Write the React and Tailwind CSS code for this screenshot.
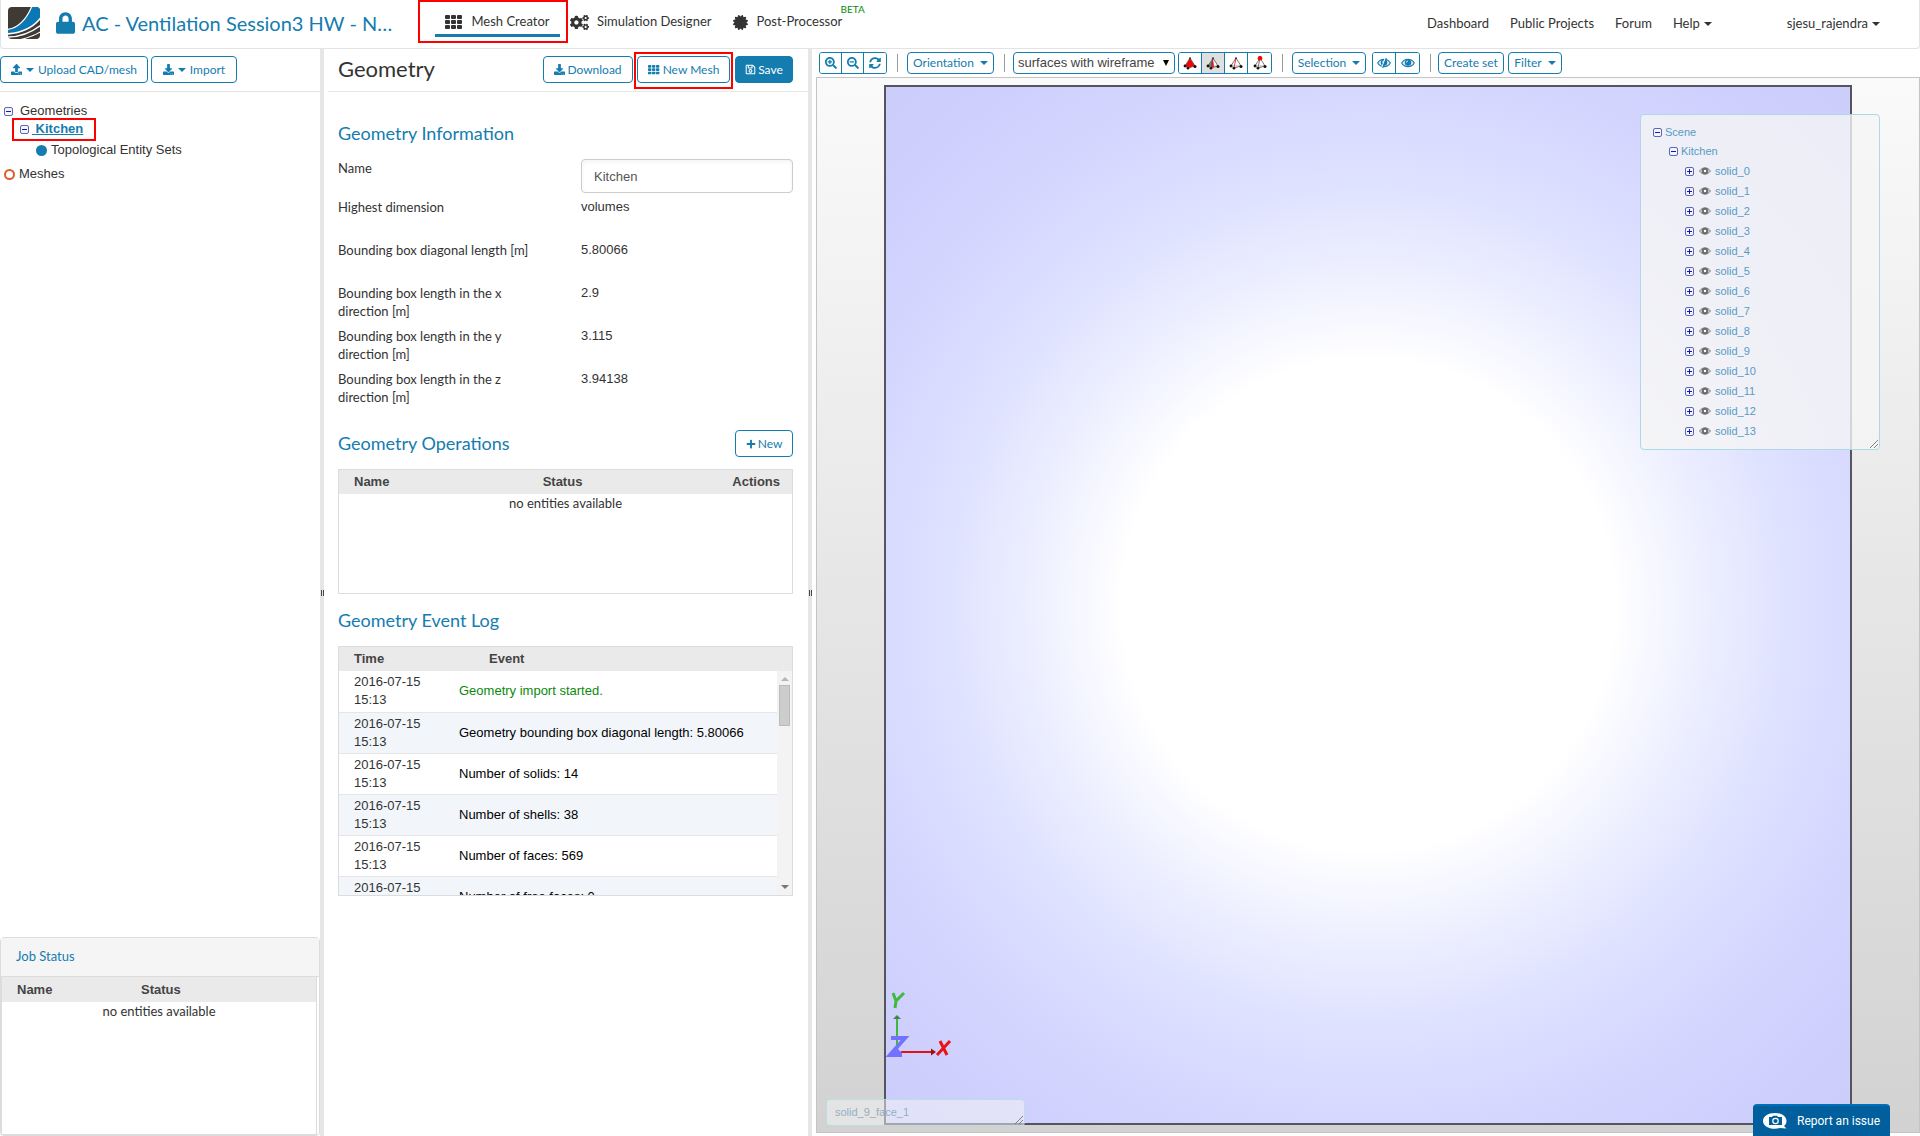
import React from "react";
import {
  FaLock,
  FaCogs,
  FaCertificate,
  FaUpload,
  FaDownload,
  FaPlus,
  FaSearchPlus,
  FaSearchMinus,
  FaSyncAlt,
  FaRegSave,
} from "react-icons/fa";

const ARIAL = "font-['Liberation_Sans',Arial,sans-serif]";

function Logo() {
  return (
    <svg viewBox="0 0 32 32" className="size-8" aria-label="Home">
      <defs>
        <clipPath id="logo-clip">
          <rect width="32" height="32" rx="4" />
        </clipPath>
      </defs>
      <g clipPath="url(#logo-clip)">
        <rect width="32" height="32" fill="#403a37" />
        <path d="M24 0H32V11C24 21 13 26 0 27V22C12 21 19 11 24 0Z" fill="#0a78b5" />
        <g fill="none" stroke="#fff">
          <path d="M24 -1C19 11 12 21 -1 22.500" strokeWidth="1.200" />
          <path d="M33 10.500C25 21 13 26 -1 27" strokeWidth="1.600" />
          <path d="M33 18C24 25 13 30 -1 30" strokeWidth="1.400" />
          <path d="M33 24.500C26 29 19 31 11 33" strokeWidth="1.200" />
        </g>
      </g>
    </svg>
  );
}

function GridIcon({ className }) {
  return (
    <svg viewBox="0 0 18 15" className={className} fill="currentColor" aria-hidden="true">
      {[0, 5, 10].map((y) =>
        [0, 6, 12].map((x) => <rect key={`${x}-${y}`} x={x} y={y} width="5" height="4" rx="1" />)
      )}
    </svg>
  );
}

function Caret() {
  return (
    <svg viewBox="0 0 8 4" className="h-1 w-2 shrink-0" fill="currentColor" aria-hidden="true">
      <path d="M0 0H8L4 4Z" />
    </svg>
  );
}

function Eye({ className, slash = false }) {
  return (
    <svg viewBox="0 0 14 10" className={className} aria-hidden="true">
      <path d="M0.700 5C3.500 0.200 10.500 0.200 13.300 5C10.500 9.800 3.500 9.800 0.700 5Z" fill="#d8e9f3" stroke="currentColor" strokeWidth="1.100" />
      <circle cx="7" cy="4.600" r="3.200" fill="currentColor" />
      <path d="M5.400 4.600A1.600 1.600 0 0 1 7 3" fill="none" stroke="#fff" strokeWidth="0.800" />
      {slash && (
        <>
          <path d="M8.300 0L4.700 10" stroke="#fff" strokeWidth="1.200" />
          <path d="M9.400 0L5.700 10" stroke="currentColor" strokeWidth="1.100" />
        </>
      )}
    </svg>
  );
}

function SceneEye() {
  return (
    <svg viewBox="0 0 12 8" className="h-2 w-3" aria-hidden="true">
      <path d="M0.500 4C3.500 -0.300 8.500 -0.300 11.500 4C8.500 8.300 3.500 8.300 0.500 4Z" fill="#ccc" stroke="#888" />
      <circle cx="6" cy="4" r="2.200" fill="#fff" stroke="#6c6c6c" strokeWidth="2" />
    </svg>
  );
}

function Toggle({ open = true }) {
  return (
    <svg viewBox="0 0 9 9" className="size-[9px] shrink-0" fill="none" aria-hidden="true">
      <rect x="0.500" y="0.500" width="8" height="8" rx="1.500" fill="#f3f3fb" stroke="#5a68b0" />
      <path d={open ? "M2 4.500H7" : "M2 4.500H7M4.500 2V7"} stroke="#1414c8" />
    </svg>
  );
}

function Tetra({ kind }) {
  return (
    <svg viewBox="0 0 14 14" className="size-[14px]" aria-hidden="true">
      <path d="M7 2L2 10L5 12L12 10Z" fill={kind === "volume" ? "#f00" : "#fff"} stroke="#555" strokeWidth="0.800" />
      {kind === "face" && <path d="M7 2L2 10L5 12Z" fill="#777" />}
      {kind === "face" && <path d="M7 2L4.500 12L8 11.300Z" fill="#f00" />}
      {kind !== "volume" && <path d="M7 2L5 12" stroke={kind === "edge" ? "#f00" : "#555"} strokeWidth="0.800" />}
      {kind !== "volume" && <path d="M2 10L12 10" stroke="#777" strokeWidth="0.600" />}
      <circle cx="2" cy="10" r="1.400" fill="#111" />
      <circle cx="5" cy="12.200" r="1.300" fill="#111" />
      <circle cx="12" cy="10.500" r="1.500" fill="#111" />
      <circle cx="7" cy="2.200" r={kind === "node" ? 2.300 : 1} fill={kind === "node" ? "#f00" : "#333"} />
    </svg>
  );
}

function Grip() {
  return (
    <svg viewBox="0 0 8 8" className="absolute right-px bottom-px size-2" stroke="#666" strokeWidth="0.800" aria-hidden="true">
      <path d="M0 8L8 0M4 8L8 4" />
    </svg>
  );
}

function Button({ children, className = "", solid = false }) {
  return (
    <button
      type="button"
      className={`flex h-[27px] items-center justify-center rounded-sm border border-[#147caf] text-xs ${
        solid ? "bg-[#147caf] text-white" : "bg-white text-[#147caf]"
      } ${className}`}
    >
      {children}
    </button>
  );
}

function ToolButton({ children, className = "" }) {
  return (
    <button
      type="button"
      className={`flex h-[22px] items-center justify-center gap-1.5 rounded-sm border border-[#147caf] text-xs text-[#147caf] ${className}`}
    >
      {children}
    </button>
  );
}

function ToolGroup({ items, cell }) {
  return (
    <div className="flex h-[22px] divide-x divide-[#147caf] overflow-hidden rounded-[3px] border border-[#147caf]">
      {items.map(({ label, icon, active }) => (
        <button
          key={label}
          type="button"
          aria-label={label}
          className={`flex items-center justify-center text-xs text-[#147caf] ${cell} ${
            active ? "bg-[#dfdfdf]" : "bg-white"
          }`}
        >
          {icon}
        </button>
      ))}
    </div>
  );
}

function Separator() {
  return <span className="mx-2.5 h-[18px] w-px bg-[#999]" />;
}

function Splitter() {
  return (
    <div className="flex w-1 shrink-0 items-center justify-end gap-px bg-[#e6e6e6]">
      <span className="h-1.5 w-px bg-[#444]" />
      <span className="h-1.5 w-px bg-[#444]" />
    </div>
  );
}

function Highlight({ className }) {
  return <span className={`pointer-events-none absolute border-2 border-[#fe0000] ${className}`} />;
}

function Header() {
  return (
    <header className="flex h-[49px] shrink-0 items-center rounded-b border border-t-0 border-[#e3e3e3] text-[13px] text-[#333]">
      <div className="flex w-[418px] shrink-0 items-center pb-0.5 pl-[7px]">
        <Logo />
        <FaLock className="ml-4 h-[22px] w-[19px] shrink-0 text-[#147caf]" />
        <h1 className="ml-[7px] truncate text-xl text-[#147caf]">AC - Ventilation Session3 HW - N…</h1>
      </div>
      <nav className="flex h-full items-center">
        <a href="#mesh" className="relative ml-4 flex h-full w-[125px] items-center justify-center gap-2 pb-1">
          <GridIcon className="h-[15px] w-[18px]" />
          Mesh Creator
          <span className="absolute inset-x-0 top-[34px] h-[3px] bg-[#147caf]" />
          <Highlight className="-left-[17px] top-0 h-[43px] w-[150px]" />
        </a>
        <a href="#simulation" className="ml-2.5 flex h-full items-center gap-2 pb-1">
          <FaCogs className="h-[17px] w-[19px]" />
          Simulation Designer
        </a>
        <a href="#post" className="relative ml-[22px] flex h-full items-center gap-2 pb-1">
          <FaCertificate className="size-[15px]" />
          Post-Processor
          <span className="absolute top-[3px] left-[107px] text-[10px] leading-3 text-[#0a8a0a]">BETA</span>
        </a>
      </nav>
      <nav className="ml-auto flex items-center gap-[21px] pr-[39px]">
        <a href="#dashboard">Dashboard</a>
        <a href="#projects">Public Projects</a>
        <a href="#forum">Forum</a>
        <button type="button" className="flex items-center gap-1">
          Help <Caret />
        </button>
        <button type="button" className="ml-[54px] flex items-center gap-1">
          sjesu_rajendra <Caret />
        </button>
      </nav>
    </header>
  );
}

function Sidebar() {
  return (
    <aside className="flex w-80 shrink-0 flex-col">
      <div className="flex h-[43px] shrink-0 gap-[3px] border-b border-[#e3e3e3] pt-[7px]">
        <Button className="w-[148px] gap-1">
          <FaUpload className="size-[11px]" />
          <Caret />
          Upload CAD/mesh
        </Button>
        <Button className="w-[86px] gap-1">
          <FaDownload className="size-[11px]" />
          <Caret />
          Import
        </Button>
      </div>
      <ul className={`pt-2.5 pl-1 text-[13px] leading-[18px] text-[#333] ${ARIAL}`}>
        <li>
          <div className="flex items-center gap-[7px]">
            <Toggle />
            Geometries
          </div>
          <ul className="pl-4">
            <li>
              <div className="relative flex items-center gap-[3px]">
                <Toggle />
                <a href="#kitchen" className="font-bold whitespace-pre text-[#147caf] underline">
                  {" Kitchen"}
                </a>
                <Highlight className="-top-0.5 -left-2 h-[23px] w-[84px]" />
              </div>
              <ul className="pt-[3px] pl-4">
                <li className="flex items-center gap-1">
                  <span className="size-[11px] rounded-full bg-[#147caf]" />
                  Topological Entity Sets
                </li>
              </ul>
            </li>
          </ul>
        </li>
        <li className="mt-1.5 flex items-center gap-1">
          <span className="size-[11px] rounded-full border-2 border-[#e05a2b]" />
          Meshes
        </li>
      </ul>
      <section className="mt-auto flex h-[199px] flex-col rounded border border-[#dcdcdc]">
        <h2 className="flex h-[39px] shrink-0 items-center border-b border-[#dcdcdc] bg-[#f5f5f5] px-[15px] text-[13px] text-[#147caf]">
          Job Status
        </h2>
        <div className="mr-0.5 flex-1 border border-t-0 border-[#dcdcdc]">
          <table className="w-full table-fixed text-[13px] text-[#333]">
            <thead className={`bg-[#eaeaea] text-[#444] ${ARIAL}`}>
              <tr className="h-[25px]">
                <th className="w-[124px] pl-[15px] text-left">Name</th>
                <th className="pl-[15px] text-left">Status</th>
              </tr>
            </thead>
            <tbody>
              <tr>
                <td colSpan={2} className="text-center leading-[19px]">
                  no entities available
                </td>
              </tr>
            </tbody>
          </table>
        </div>
      </section>
    </aside>
  );
}

const FACTS = [
  ["Highest dimension", "volumes"],
  ["Bounding box diagonal length [m]", "5.80066"],
  ["Bounding box length in the x direction [m]", "2.9"],
  ["Bounding box length in the y direction [m]", "3.115"],
  ["Bounding box length in the z direction [m]", "3.94138"],
];

const EVENTS = [
  "Geometry import started.",
  "Geometry bounding box diagonal length: 5.80066",
  "Number of solids: 14",
  "Number of shells: 38",
  "Number of faces: 569",
  "Number of free faces: 0",
];

function GeometryPanel() {
  return (
    <main className="flex w-[484px] shrink-0 flex-col text-[13px] text-[#333]">
      <div className="ml-1 flex h-[43px] shrink-0 items-start border-b border-[#e9e9e9] pt-[7px] pr-[15px] pl-2.5">
        <h2 className="mr-auto text-[22px] leading-[26px]">Geometry</h2>
        <Button className="w-[90px] gap-0.5">
          <FaDownload className="size-[11px]" />
          Download
        </Button>
        <div className="relative ml-1 mr-[5px] w-[93px]">
          <Button className="w-full gap-[3px]">
            <GridIcon className="h-2.5 w-3" />
            New Mesh
          </Button>
          <Highlight className="-inset-x-[3px] -top-1 -bottom-[6px]" />
        </div>
        <Button solid className="w-[58px] gap-0.5">
          <FaRegSave className="size-[11px]" />
          Save
        </Button>
      </div>

      <div className="pr-[15px] pl-3.5">
        <h3 className="pt-[29px] text-lg leading-6 text-[#147caf]">Geometry Information</h3>
        <div className="mt-3.5 flex h-[39px] leading-[18px]">
          <label htmlFor="geometry-name" className="w-[243px] shrink-0">
            Name
          </label>
          <input
            id="geometry-name"
            defaultValue="Kitchen"
            className={`h-[34px] min-w-0 flex-1 rounded border border-[#ccc] px-3 text-[#555] shadow-inner ${ARIAL}`}
          />
        </div>
        <dl className="leading-[18px]">
          {FACTS.map(([label, value]) => (
            <div key={label} className="flex h-[43px]">
              <dt className="w-[243px] shrink-0 pr-[50px]">{label}</dt>
              <dd className={ARIAL}>{value}</dd>
            </div>
          ))}
        </dl>

        <div className="mt-[17px] flex items-start justify-between">
          <h3 className="text-lg leading-[26px] text-[#147caf]">Geometry Operations</h3>
          <Button className="w-[58px] gap-0.5">
            <FaPlus className="size-2.5" />
            New
          </Button>
        </div>
        <div className="mt-3 h-[125px] border border-[#dcdcdc]">
          <table className="w-full table-fixed">
            <thead className={`bg-[#eaeaea] text-[#444] ${ARIAL}`}>
              <tr className="h-6">
                <th className="pl-[15px] text-left">Name</th>
                <th className="pr-1.5 text-center">Status</th>
                <th className="pr-3 text-right">Actions</th>
              </tr>
            </thead>
            <tbody>
              <tr>
                <td colSpan={3} className="text-center leading-[19px]">
                  no entities available
                </td>
              </tr>
            </tbody>
          </table>
        </div>

        <h3 className="mt-3.5 text-lg leading-6 text-[#147caf]">Geometry Event Log</h3>
        <div className={`mt-3.5 h-[250px] overflow-hidden border border-[#dcdcdc] ${ARIAL}`}>
          <div className="flex h-6 items-center bg-[#eaeaea] pl-[15px] font-bold text-[#444]">
            <span className="w-[135px]">Time</span>
            <span>Event</span>
          </div>
          <div className="flex h-56">
            <div className="flex-1 overflow-hidden">
              <table className="w-full table-fixed" aria-label="Geometry Event Log">
                <tbody>
                  {EVENTS.map((event, i) => (
                    <tr key={event} className="h-[41px] border-b border-[#e6e6e6] leading-[18px] even:bg-[#f2f6fb]">
                      <td className="w-[120px] pr-8 pl-[15px]">2016-07-15 15:13</td>
                      <td className={i === 0 ? "text-[#0a8a0a]" : "text-black"}>{event}</td>
                    </tr>
                  ))}
                </tbody>
              </table>
            </div>
            <div className="flex w-[15px] flex-col items-center justify-between bg-[#f3f3f3] py-1.5">
              <div className="flex flex-col items-center gap-1">
                <span className="rotate-180 text-[#b5b5b5]">
                  <Caret />
                </span>
                <span className="h-[41px] w-[11px] border border-[#bbb] bg-[#cdcdcd]" />
              </div>
              <span className="text-[#777]">
                <Caret />
              </span>
            </div>
          </div>
        </div>
      </div>
    </main>
  );
}

function Toolbar() {
  return (
    <div className="flex h-7 shrink-0 items-center pl-[7px]">
      <ToolGroup
        cell="w-[22px]"
        items={[
          { label: "Zoom in", icon: <FaSearchPlus /> },
          { label: "Zoom out", icon: <FaSearchMinus /> },
          { label: "Reset view", icon: <FaSyncAlt /> },
        ]}
      />
      <Separator />
      <ToolButton className="-ml-px w-[87px]">
        Orientation <Caret />
      </ToolButton>
      <Separator />
      <div className="relative -ml-0.5">
        <select
          aria-label="Render mode"
          className={`block h-[22px] w-[162px] appearance-none rounded-sm border border-[#147caf] bg-white pl-1 text-[13px] text-[#444] ${ARIAL}`}
        >
          <option>surfaces with wireframe</option>
        </select>
        <svg viewBox="0 0 6 6" className="pointer-events-none absolute top-2 right-1.5 size-1.5" aria-hidden="true">
          <path d="M0 0H6L3 6Z" />
        </svg>
      </div>
      <div className="ml-[3px]">
        <ToolGroup
          cell="w-[23px]"
          items={[
            { label: "Pick volumes", icon: <Tetra kind="volume" /> },
            { label: "Pick faces", icon: <Tetra kind="face" />, active: true },
            { label: "Pick edges", icon: <Tetra kind="edge" /> },
            { label: "Pick nodes", icon: <Tetra kind="node" /> },
          ]}
        />
      </div>
      <Separator />
      <ToolButton className="-ml-px mr-1.5 w-[74px]">
        Selection <Caret />
      </ToolButton>
      <ToolGroup
        cell="w-[23px]"
        items={[
          { label: "Hide selection", icon: <Eye slash className="h-2.5 w-3.5" /> },
          { label: "Show all", icon: <Eye className="h-2.5 w-3.5" /> },
        ]}
      />
      <Separator />
      <ToolButton className="-ml-[3px] mr-1 w-[66px]">Create set</ToolButton>
      <ToolButton className="w-[54px]">
        Filter <Caret />
      </ToolButton>
    </div>
  );
}

function Axes() {
  return (
    <svg viewBox="0 0 70 72" className="absolute bottom-[70px] left-[68px] h-[72px] w-[70px]" fill="none" aria-label="Orientation axes">
      <path d="M12 62V28" stroke="#3db83d" strokeWidth="2" />
      <path d="M8 29L12 25L16 29Z" fill="#3a8a50" />
      <path d="M16 62H46" stroke="#e01212" strokeWidth="2" />
      <path d="M46 58.500L51 62L46 65.500Z" fill="#a01010" />
      <path d="M8 3L11 11M19 3L11 11L10 18" stroke="#3dbb3d" strokeWidth="3" />
      <path d="M55 51L62 65M65 51L52 65" stroke="#e81414" strokeWidth="3" />
      <path d="M6 48H20L5 65H17" stroke="#7272ff" strokeWidth="4" />
      <path d="M4 67L12 58L17 63V67Z" fill="#7272ff" />
    </svg>
  );
}

function SceneTree() {
  const solids = Array.from({ length: 14 }, (_, i) => `solid_${i}`);
  return (
    <div
      className={`absolute top-[36px] right-[39px] h-[336px] w-60 rounded border border-[#add8e6] bg-[#f5f5f5]/80 pt-2 pl-3 text-[11px] text-[#579bc4] ${ARIAL}`}
    >
      <div className="flex h-[19px] items-center gap-[3px]">
        <Toggle />
        Scene
      </div>
      <div className="flex h-[19px] items-center gap-[3px] pl-4">
        <Toggle />
        Kitchen
      </div>
      <ul className="pl-8">
        {solids.map((name) => (
          <li key={name} className="flex h-5 items-center">
            <Toggle open={false} />
            <span className="mr-1 ml-[5px]">
              <SceneEye />
            </span>
            {name}
          </li>
        ))}
      </ul>
      <Grip />
    </div>
  );
}

function Viewer() {
  return (
    <section className="flex min-w-0 flex-1 flex-col">
      <Toolbar />
      <div className="relative mb-[3px] ml-1 flex flex-1 flex-col border border-[#c4c4c4] bg-linear-to-b from-[#fafafa] to-[#d2d2d2] px-[67px] pt-[7px] pb-[7px]">
        <div className="flex-1 border-2 border-[#55555f] bg-[radial-gradient(circle_at_50%_50%,#ffffff_0px,#ffffff_245px,#eff1ff_325px,#dfe2ff_420px,#d5d7ff_520px,#cecffd_630px,#cccdfb_100%)]" />
        <Axes />
        <SceneTree />
        <div
          className={`absolute bottom-1.5 left-[9px] flex h-[27px] w-[199px] items-center rounded border border-[#add8e6]/70 bg-[#f5f5f5]/50 pl-2 text-[11px] text-[#92afc6] ${ARIAL}`}
        >
          solid_9_face_1
          <Grip />
        </div>
      </div>
    </section>
  );
}

function ReportButton() {
  return (
    <button
      type="button"
      className="fixed right-[30px] bottom-0 flex h-8 w-[137px] items-center gap-2.5 rounded-t-sm border-t-2 border-[#0070b8] bg-[#005f9c] pl-2.5 font-[Roboto,sans-serif] text-xs text-white"
    >
      <svg viewBox="0 0 24 16" className="h-4 w-6" aria-hidden="true">
        <path d="M12 0C19 0 23.500 3.500 23.500 8C23.500 10 22.500 12 21 13L23.500 15.500L17 15C9 17.500 0 14 0 8C0 3.500 5 0 12 0Z" fill="#fff" />
        <path d="M6 4H9L10 2.800H14L15 4H19V12H6Z" fill="#005f9c" />
        <circle cx="12.500" cy="8" r="2.700" fill="none" stroke="#fff" strokeWidth="1.200" />
      </svg>
      Report an issue
    </button>
  );
}

export default function App() {
  return (
    <div className="flex h-screen flex-col overflow-hidden bg-white font-[Lato,sans-serif]">
      <Header />
      <div className="flex min-h-0 flex-1">
        <Sidebar />
        <Splitter />
        <GeometryPanel />
        <Splitter />
        <Viewer />
      </div>
      <ReportButton />
    </div>
  );
}
